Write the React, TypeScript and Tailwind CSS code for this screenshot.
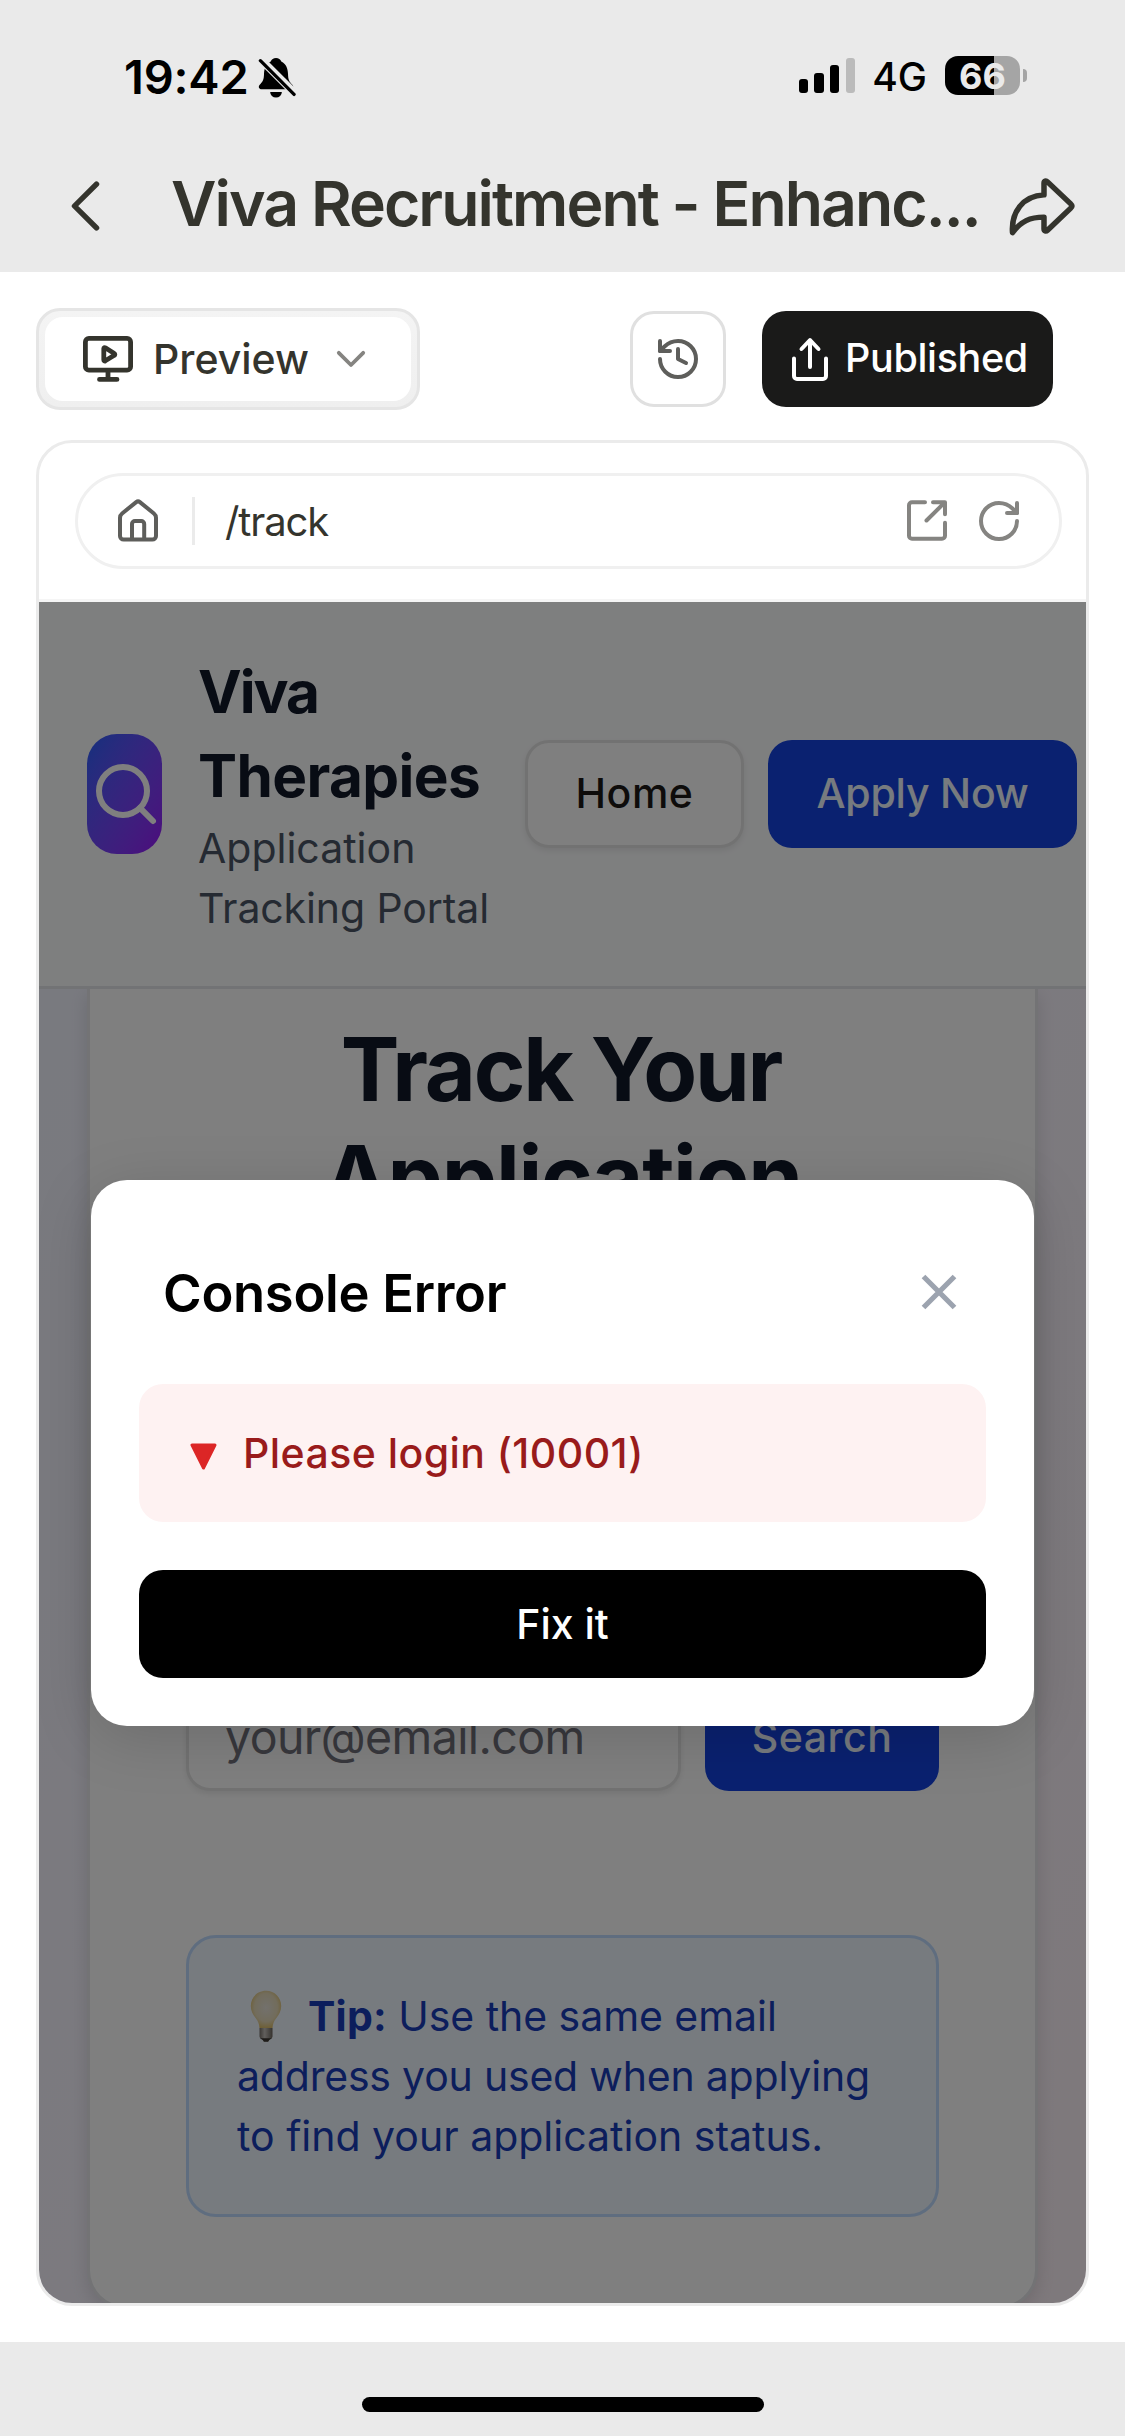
import { History, RotateCw, Search } from "lucide-react";

function BellOff() {
  return (
    <svg className="ml-[8px] h-[43px] w-[39px]" viewBox="258 57 40 44" preserveAspectRatio="none" fill="none">
      <path
        d="M277.5 59c2.600 0 4.600 1.500 5.400 3.600 5 2.400 6.700 7 6.900 12.600.2 6 .8 7.600 4.400 11.200 1.800 2 .9 4.600-2 4.600h-29.400c-2.900 0-3.800-2.600-2-4.600 3.600-3.600 4.200-5.200 4.400-11.200.2-5.600 1.900-10.200 6.900-12.600.8-2.100 2.800-3.600 5.400-3.600z"
        fill="#000"
      />
      <path d="M271.500 93.800h12a6 5.700 0 0 1-12 0z" fill="#000" />
      <path d="M262 60.500l37 37" stroke="#eaeaea" strokeWidth="8" />
      <path d="M261.500 61.800l34.500 34.500" stroke="#000" strokeWidth="3.400" strokeLinecap="round" />
    </svg>
  );
}

function Battery() {
  return (
    <div className="ml-[18px] flex items-center">
      <div className="flex h-[39px] w-[75px] items-center justify-center rounded-[13px] bg-linear-to-r from-black from-65% to-[#a5a5a5] to-65%">
        <span className="text-[36px] leading-none font-bold text-[#eaeaea]">66</span>
      </div>
      <div className="ml-[3px] h-[13px] w-[4px] rounded-r-full bg-[#a5a5a5]" />
    </div>
  );
}

function StatusBar() {
  return (
    <div className="flex h-[136px] items-center justify-between pr-[98px] pl-[124px]">
      <div className="mt-[18px] flex items-center">
        <span className="text-[47px] leading-[48px] font-semibold tracking-[-0.200px] text-black">19:42</span>
        <BellOff />
      </div>
      <div className="mt-[15px] flex items-center">
        <div className="flex h-[35px] items-end gap-[6.500px]">
          <div className="h-[14px] w-[9.300px] rounded-[3px] bg-black" />
          <div className="h-[20px] w-[9.300px] rounded-[3px] bg-black" />
          <div className="h-[28px] w-[9.300px] rounded-[3px] bg-black" />
          <div className="h-[35px] w-[9.300px] rounded-[3px] bg-[#bbbbbb]" />
        </div>
        <span className="mt-[3px] ml-[17px] text-[39px] leading-[40px] font-medium text-black">4G</span>
        <Battery />
      </div>
    </div>
  );
}

function TitleBar() {
  return (
    <div className="flex h-[136px] items-center pl-[71px]">
      <svg className="mt-[4px] h-[50px] w-[30px]" viewBox="71 185 30 52" preserveAspectRatio="none" fill="none">
        <path d="M96.500 188.200L74.500 211l22 22.800" stroke="#34342d" strokeWidth="5.500" strokeLinecap="round" strokeLinejoin="round" />
      </svg>
      <h1 className="mt-[-2px] ml-[70px] w-[836px] text-[62.500px] leading-[80px] font-semibold tracking-[-1.950px] whitespace-nowrap text-[#34342d]">
        Viva Recruitment - Enhanc...
      </h1>
      <svg className="mt-[6px] h-[62px] w-[70px]" viewBox="1007 180 70 64" preserveAspectRatio="none" fill="none">
        <path
          d="M1044 199.500V187.500C1044 185 1046 184.500 1047.500 186L1070.500 208.500C1072.500 210.500 1072.500 211.500 1070.500 213.500L1047.500 236C1046 237.500 1044 237 1044 234.500V222.500C1030 222.500 1021 226.500 1012.500 238.500C1011 217 1023 200.500 1044 199.500Z"
          stroke="#34342d"
          strokeWidth="5.500"
          strokeLinejoin="round"
        />
      </svg>
    </div>
  );
}

function Toolbar() {
  return (
    <div className="flex items-center px-[36px] pt-[36px]">
      <button className="flex h-[102px] w-[384px] items-center rounded-[24px] border-[3px] border-[#e5e5e5] bg-linear-to-b from-[#f4f4f4] to-[#efefef] p-[6px]">
        <span className="flex h-[84px] w-full items-center rounded-[18px] bg-white pl-[38px]">
          <svg className="h-[46px] w-[50px]" viewBox="83 336 50 46" fill="none" stroke="#34342d" strokeWidth="4.800" strokeLinecap="round" strokeLinejoin="round">
            <rect x="85.400" y="338.400" width="45.200" height="31.800" rx="3.500" />
            <path d="M108 371v8M99.500 379.400h17.500M103.800 348.500v11.500c0 .8.800 1.200 1.500.8l9-5.500c.7-.4.7-1.300 0-1.700l-9-5.800c-.7-.4-1.500 0-1.500.7z" />
          </svg>
          <span className="ml-[20px] text-[41px] leading-[60px] font-medium text-[#34342d]">Preview</span>
          <svg className="ml-[27px] h-[18px] w-[30px]" viewBox="336 350 30 18" fill="none">
            <path d="M338.800 352.800L351 365l12.200-12.200" stroke="#858481" strokeWidth="3.800" strokeLinecap="round" strokeLinejoin="round" />
          </svg>
        </span>
      </button>
      <button className="ml-[210px] flex size-[96px] items-center justify-center rounded-[24px] border-[3px] border-[#e0e0e0] bg-white">
        <History className="size-[48px] text-[#5e5e5b]" strokeWidth={2} />
      </button>
      <button className="ml-[36px] flex h-[96px] w-[291px] items-center rounded-[24px] bg-[#1a1a19] pl-[30px]">
        <svg className="h-[46px] w-[36px]" viewBox="792 336 36 46" fill="none" stroke="#fff" strokeWidth="4" strokeLinecap="round" strokeLinejoin="round">
          <path d="M794 358.500v17.500a3 3 0 0 0 3 3h26a3 3 0 0 0 3-3v-17.500M810 367v-26.500M801.500 349l8.500-9 8.500 9" />
        </svg>
        <span className="mt-[-3px] ml-[17px] text-[39.500px] leading-[60px] font-medium tracking-[-0.350px] text-white">Published</span>
      </button>
    </div>
  );
}

function AddressBar() {
  return (
    <div className="flex h-[159px] items-center border-b-[3px] border-[#f5f5f5] pr-[24px] pl-[36px]">
      <div className="flex h-[96px] w-full items-center rounded-full border-[3px] border-[#f0f0f0] pr-[36px] pl-[40px]">
        <svg className="h-[43px] w-[40px]" viewBox="118 498.500 40 43" fill="none" stroke="#5e5e5b" strokeWidth="4" strokeLinecap="round" strokeLinejoin="round">
          <path d="M136.200 501.600a3 3 0 0 1 3.700 0l14 11.400a5.600 5.600 0 0 1 2.100 4.400v18a3.700 3.700 0 0 1-3.700 3.700h-28.600a3.700 3.700 0 0 1-3.700-3.700v-18a5.600 5.600 0 0 1 2.100-4.400zM132 539v-15.500a3 3 0 0 1 3-3h6.200a3 3 0 0 1 3 3v15.500" />
        </svg>
        <div className="ml-[34px] h-[48px] w-[3px] bg-[#ebebeb]" />
        <span className="mt-[2px] ml-[30px] grow text-[40px] leading-[60px] tracking-[-1.100px] text-[#34342d]">/track</span>
        <svg className="h-[41px] w-[40px]" viewBox="907 500.500 40 41" fill="none" stroke="#858481" strokeWidth="4" strokeLinecap="round" strokeLinejoin="round">
          <path d="M925 502.700h-13a3 3 0 0 0-3 3v30.500a3 3 0 0 0 3 3h30a3 3 0 0 0 3-3v-13M933 502.700h12v12M944.500 503.200L926.500 521" />
        </svg>
        <RotateCw className="ml-[28px] size-[48px] text-[#858481]" strokeWidth={2} />
      </div>
    </div>
  );
}

function SiteHeader() {
  return (
    <header className="z-10 flex h-[387px] shrink-0 items-center border-b-[3px] border-[#e5e7eb] bg-[#fdfeff] pl-[48px]">
      <div className="flex h-[120px] w-[75px] shrink-0 items-center justify-center rounded-[30px] bg-linear-to-br from-[#2060fc] to-[#9810fa]">
        <Search className="ml-[3px] size-[72px] shrink-0 text-white" strokeWidth={2} />
      </div>
      <div className="ml-[36px] w-[303px] shrink-0">
        <div className="text-[58.500px] leading-[84px] font-bold text-[#101828]">
          <div className="tracking-[-2px]">Viva</div>
          <div className="tracking-[-0.600px]">Therapies</div>
        </div>
        <div className="text-[41px] leading-[60px] whitespace-nowrap text-[#4a5565]">
          <div>Application</div>
          <div className="tracking-[-0.100px]">Tracking Portal</div>
        </div>
      </div>
      <button className="ml-[24px] flex h-[108px] w-[219px] shrink-0 items-center justify-center rounded-[24px] border-[3px] border-[#e5e5e5] bg-white text-[41px] font-medium tracking-[0.500px] text-[#1c1917] shadow-[0_3px_6px_rgba(0,0,0,0.08)]">
        Home
      </button>
      <button className="ml-[24px] flex h-[108px] w-[309px] shrink-0 items-center justify-center rounded-[24px] bg-[#1443e0] text-[41px] font-medium tracking-[-0.200px] text-[#eff6ff]">
        Apply Now
      </button>
    </header>
  );
}

function TrackCard() {
  return (
    <div className="mx-[48px] flex h-[1320px] shrink-0 flex-col rounded-b-[39px] border-x-[3px] border-b-[3px] border-[#e6e7eb] bg-white px-[96px] pt-[26px] shadow-[0_6px_18px_rgba(0,0,0,0.12)]">
      <h2 className="text-center text-[88px] leading-[108px] font-bold whitespace-nowrap text-[#101828]">
        <div className="mr-[3px] tracking-[-2.200px]">Track Your</div>
        <div className="tracking-[-1.300px]">Application</div>
      </h2>
      <div className="mt-[452px] flex gap-[24px]">
        <div className="flex h-[108px] grow items-center rounded-[24px] border-[3px] border-[#e5e5e5] bg-white pt-[2px] pl-[36px] text-[46.500px] tracking-[-0.600px] text-[#71717b] shadow-[0_3px_6px_rgba(0,0,0,0.08)]">
          your@email.com
        </div>
        <button className="flex h-[108px] w-[234px] items-center justify-center rounded-[24px] bg-[#1443e0] pt-[2px] text-[41px] font-medium tracking-[0.500px] text-[#eff6ff]">
          Search
        </button>
      </div>
      <div className="mt-[144px] h-[282px] rounded-[30px] border-[3px] border-[#bedbff] bg-[#eff6ff] px-[48px] py-[48px] text-[41px] leading-[60px] whitespace-nowrap text-[#193cb8]">
        <div className="flex items-center">
          <svg className="mr-[26px] ml-[13px] h-[52px] w-[32px]" viewBox="0 0 32 52">
            <defs>
              <radialGradient id="glass" cx="0.5" cy="0.45" r="0.58">
                <stop offset="0" stopColor="#e6e2da" />
                <stop offset="0.65" stopColor="#e4d9b8" />
                <stop offset="1" stopColor="#dcbb62" />
              </radialGradient>
              <linearGradient id="cap" x1="0" y1="0" x2="1" y2="0">
                <stop offset="0" stopColor="#77716a" />
                <stop offset="0.4" stopColor="#c4c0ba" />
                <stop offset="1" stopColor="#6b655c" />
              </linearGradient>
            </defs>
            <path d="M16 .8C24.700 .8 31.200 7.500 31.200 16c0 5-2.200 8.700-5 12.300C23.800 31.500 22.800 34 22.500 38h-13c-.3-4-1.300-6.500-3.700-9.700C3 24.700.8 21 .8 16 .8 7.500 7.300.8 16 .8z" fill="url(#glass)" />
            <path d="M9.500 38h13v8.500c0 1.500-1.800 2.500-3 3l-1 2h-5l-1-2c-1.200-.5-3-1.500-3-3z" fill="url(#cap)" />
            <path d="M10 48.200h12l-2.800 1.800-1.200 1.800h-4l-1.200-1.800z" fill="#3c3832" />
          </svg>
          <span className="tracking-[-0.050px]">
            <strong className="font-bold tracking-[0.200px]">Tip:</strong> Use the same email
          </span>
        </div>
        <div className="tracking-[-0.200px]">address you used when applying</div>
        <div>to find your application status.</div>
      </div>
    </div>
  );
}

function ErrorDialog() {
  return (
    <div className="absolute inset-0 z-20 flex items-center justify-center bg-black/50">
      <div className="mt-[2px] h-[546px] w-[943px] rounded-[36px] bg-white px-[48px] pt-[66px] shadow-[0_12px_60px_rgba(0,0,0,0.15)]">
        <div className="flex h-[94px] items-center justify-between pr-[29px] pl-[24px]">
          <h3 className="text-[52.500px] leading-[72px] font-semibold tracking-[-0.300px] text-black">Console Error</h3>
          <svg className="mt-[-3px] h-[36px] w-[36px]" viewBox="0 0 36 36">
            <path d="M2.500 2.500l31 31M33.500 2.500l-31 31" stroke="#9ca3af" strokeWidth="5.200" />
          </svg>
        </div>
        <div className="mt-[44px] flex h-[138px] items-center rounded-[24px] bg-[#fef2f2] pl-[51px]">
          <svg className="mt-[6px] h-[27px] w-[27px]" viewBox="0 0 27 27">
            <path d="M2 2h23L13.500 25z" fill="#dc2626" stroke="#dc2626" strokeWidth="3" strokeLinejoin="round" />
          </svg>
          <span className="ml-[26px] text-[41px] leading-[60px] font-medium tracking-[0.450px] text-[#991b1b]">Please login (10001)</span>
        </div>
        <button className="mt-[48px] flex h-[108px] w-full items-center justify-center rounded-[24px] bg-black text-[41px] font-medium text-white">
          Fix it
        </button>
      </div>
    </div>
  );
}

export default function App() {
  return (
    <div className="flex h-[2436px] w-[1125px] flex-col overflow-hidden bg-white font-['Inter',sans-serif]">
      <div className="h-[272px] shrink-0 bg-[#eaeaea]">
        <StatusBar />
        <TitleBar />
      </div>
      <Toolbar />
      <div className="mx-[36px] mt-[30px] flex h-[1866px] shrink-0 flex-col overflow-hidden rounded-[36px] border-[3px] border-[#ebebeb] bg-white">
        <AddressBar />
        <div className="relative flex grow flex-col overflow-hidden bg-linear-to-br from-[#f1f4ff] via-[#f8f5ff] to-[#fdf2f8]">
          <SiteHeader />
          <TrackCard />
          <ErrorDialog />
        </div>
      </div>
      <div className="mt-auto flex h-[94px] shrink-0 justify-center bg-[#eaeaea] pt-[55px]">
        <div className="h-[15px] w-[402px] rounded-full bg-black" />
      </div>
    </div>
  );
}
